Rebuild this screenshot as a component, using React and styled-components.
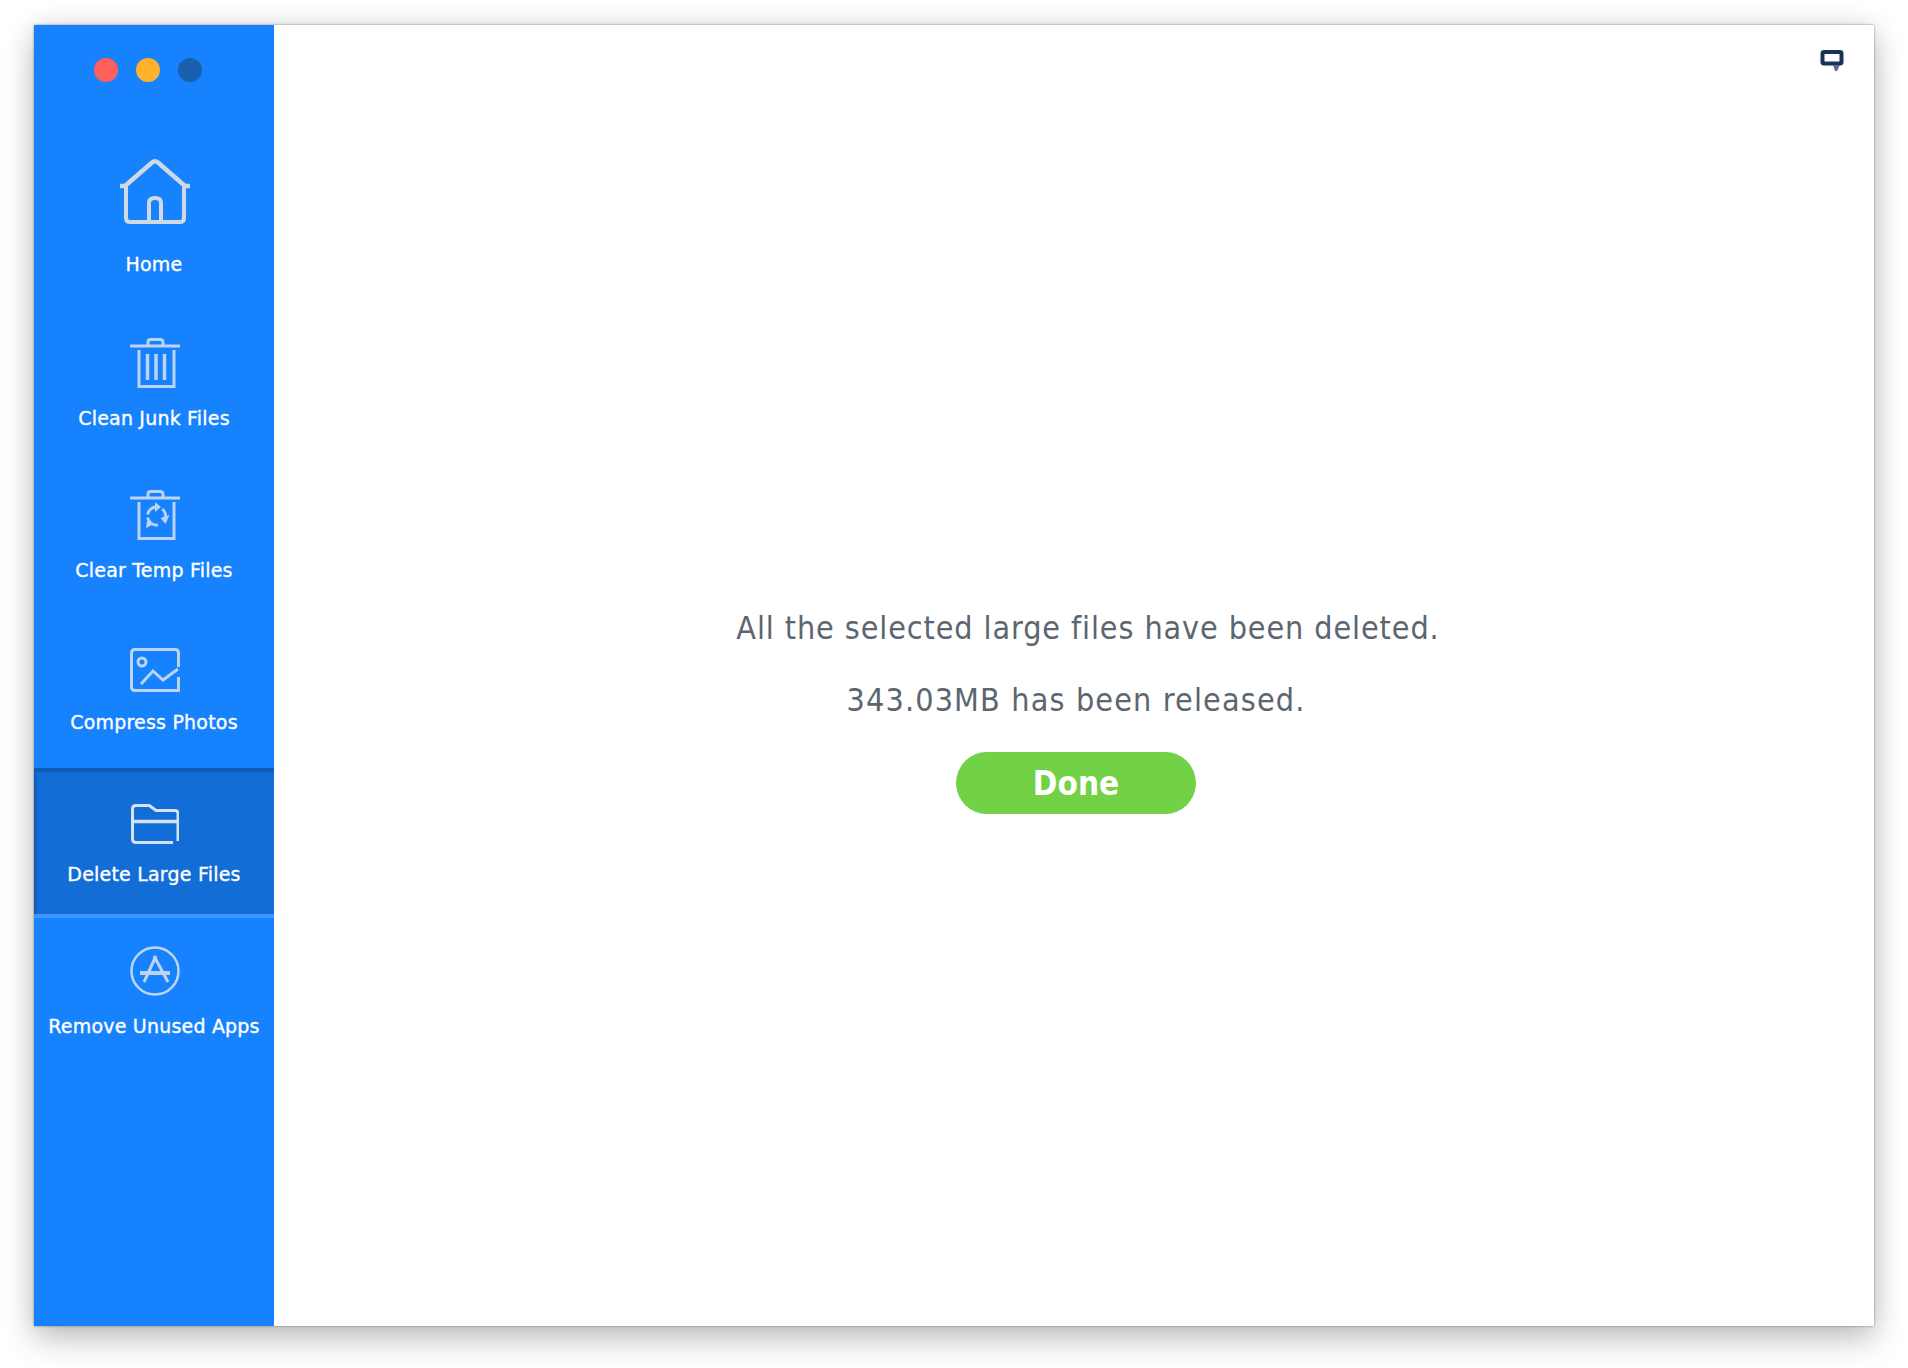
import React from "react";
import styled, { createGlobalStyle } from "styled-components";

const Global = createGlobalStyle`
  html, body { margin: 0; padding: 0; background: #fff; }
  body { font-family: "DejaVu Sans", "Noto Sans", sans-serif; }
`;
const Page = styled.div`
  width: 1908px; height: 1368px; box-sizing: border-box;
  padding: 25px 34px 42px 34px; overflow: hidden;
`;
const Window = styled.div`
  position: relative; display: flex; height: 100%;
  background: #fff;
  box-shadow: 0 0 2px rgba(0,0,0,.45), 0 14px 30px rgba(0,0,0,.22), 0 0 24px rgba(0,0,0,.1);
`;
const Sidebar = styled.aside`
  width: 240px; flex: none; background: #1682fe; display: flex; flex-direction: column;
`;
const Dots = styled.div`
  height: 133px; box-sizing: border-box; padding: 33px 0 0 60px; display: flex; gap: 18px; align-items: flex-start;
`;
const Dot = styled.span`
  width: 24px; height: 24px; border-radius: 50%; background: ${p => p.$c};
`;
const Item = styled.div`
  height: ${p => p.$h || 152}px; box-sizing: border-box; display: flex; flex-direction: column; align-items: center;
  background: ${p => p.$active ? "#136dd6" : "transparent"};
  ${p => p.$active ? `
    height: 150px;
    margin-bottom: 2px;
    border-top: 4px solid #0f5cb5;
    border-bottom: 4px solid #3c96ff;
    box-shadow: inset 3px 0 0 #105fbb;
  ` : ""}
`;
const IconBox = styled.div`
  height: ${p => p.$h}px; display: flex; align-items: flex-end; justify-content: center; flex: none;
  margin-left: 2px;
  color: ${p => p.$c || "#bcd4f2"};
`;
const Label = styled.div`
  margin-top: ${p => p.$mt}px; color: #fff; font-size: 19px; line-height: 24px; font-weight: 400; white-space: nowrap;
  letter-spacing: 0.2px; -webkit-text-stroke: 0.35px #fff;
`;
const Main = styled.main`
  flex: 1; display: flex; flex-direction: column; align-items: center; padding: 585px 0 0 4px;
`;
const Message = styled.p`
  margin: 0; font-size: 32px; font-stretch: condensed; line-height: 36px; color: #5c6670; white-space: nowrap;
  letter-spacing: ${p => p.$ls}px;
  margin-bottom: ${p => p.$mb}px;
  padding-left: ${p => p.$pl || 0}px;
`;
const DoneButton = styled.button`
  width: 240px; height: 62px; border: 0; border-radius: 31px; background: #72d144; color: #fff;
  font-family: "DejaVu Sans", sans-serif; font-stretch: condensed; font-size: 33px; font-weight: 700; padding: 0;
`;
const Chat = styled.svg`
  position: absolute; top: 24px; right: 30px;
`;

const S = { fill: "none", stroke: "currentColor", strokeWidth: 3 };

const HomeIcon = () => (
  <svg width="70" height="66" viewBox="0 0 70 66" {...S}>
    <path strokeWidth="4.500" strokeLinejoin="round" d="M0 28h5L32 4.500q3-2.500 6 0L65 28h5" />
    <path strokeWidth="4" d="M6 28v32q0 4 4 4h50q4 0 4-4V28" />
    <path strokeWidth="4" d="M29 64V45q0-5 6-5t6 5v19" />
  </svg>
);
const TrashIcon = ({ children }) => (
  <svg width="50" height="50" viewBox="0 0 50 50" {...S}>
    <path d="M0 8h50" />
    <path d="M18 7V4q0-2.500 3-2.500h9q3 0 3 2.500v3" />
    <path d="M9 12v36.500h35V12" />
    {children}
  </svg>
);
const JunkIcon = () => (
  <TrashIcon>
    <path strokeWidth="3.500" d="M17.500 16v26M26 16v26M34.500 16v26" />
  </TrashIcon>
);
const TempIcon = () => (
  <TrashIcon>
    <g strokeWidth="2.800">
      <path d="M17.600 24.400A9 9 0 0 1 26.500 17" />
      <path d="M32.300 19.100A9 9 0 0 1 35 29" />
      <path d="M28 34.900A9 9 0 0 1 17.600 27.600" />
    </g>
    <g fill="currentColor" stroke="none">
      <path d="M25 12l6 5-6 5z" />
      <path d="M39.500 25l-4 9-5-6z" />
      <path d="M16 38l1-7 7 3z" />
    </g>
  </TrashIcon>
);
const PhotoIcon = () => (
  <svg width="50" height="44" viewBox="0 0 50 44" {...S}>
    <path d="M48.500 19V5q0-3.500-3.500-3.500H5Q1.500 1.500 1.500 5v34Q1.500 42.500 5 42.500h43.500V29" />
    <circle cx="12" cy="14" r="4" />
    <path d="M11 36L23 23l10 9 15-11" />
  </svg>
);
const FolderIcon = () => (
  <svg width="48" height="40" viewBox="0 0 48 40" {...S}>
    <path d="M47 37V9.500q0-3-3-3H25L19 2q-.5-.5-1.500-.5H5Q1.500 1.500 1.500 5v30q0 3.500 3.500 3.500h37" />
    <path strokeWidth="3.500" d="M1.500 17.500h45.500" />
  </svg>
);
const AppsIcon = () => (
  <svg width="50" height="50" viewBox="0 0 50 50" {...S}>
    <circle cx="25" cy="25" r="23.500" strokeWidth="2.500" />
    <path strokeWidth="3" d="M26 10L14 36M24 10l14 26" />
    <path strokeWidth="4" d="M10 27h30" />
  </svg>
);
const ChatIcon = () => (
  <Chat width="24" height="24" viewBox="0 0 24 24">
    <rect x="2.500" y="3" width="19" height="11.500" rx="1.500" fill="none" stroke="#17335c" strokeWidth="4" />
    <path fill="#5d6f8a" d="M13 16h7l-3 6h-2z" />
  </Chat>
);

const items = [
  { label: "Home", Icon: HomeIcon, h: 66, mt: 28, rowH: 154, c: "#d0d8e4" },
  { label: "Clean Junk Files", Icon: JunkIcon },
  { label: "Clear Temp Files", Icon: TempIcon },
  { label: "Compress Photos", Icon: PhotoIcon },
  { label: "Delete Large Files", Icon: FolderIcon, active: true },
  { label: "Remove Unused Apps", Icon: AppsIcon },
];

export default function App() {
  return (
    <Page>
      <Global />
      <Window>
        <Sidebar>
          <Dots>
            <Dot $c="#ff5f5b" />
            <Dot $c="#feb22e" />
            <Dot $c="#1b60ae" />
          </Dots>
          {items.map(({ label, Icon, h, mt, rowH, c, active }) => (
            <Item key={label} $active={active} $h={rowH}>
              <IconBox $h={active ? 72 : (h || 76)} $c={c || (active ? "#d2e3f8" : undefined)}>
                <Icon />
              </IconBox>
              <Label $mt={mt || 18}>{label}</Label>
            </Item>
          ))}
        </Sidebar>
        <Main>
          <Message $mb={36} $pl={24} $ls={0.9}>All the selected large files have been deleted.</Message>
          <Message $mb={34} $ls={1.15}>343.03MB has been released.</Message>
          <DoneButton>Done</DoneButton>
        </Main>
        <ChatIcon />
      </Window>
    </Page>
  );
}
